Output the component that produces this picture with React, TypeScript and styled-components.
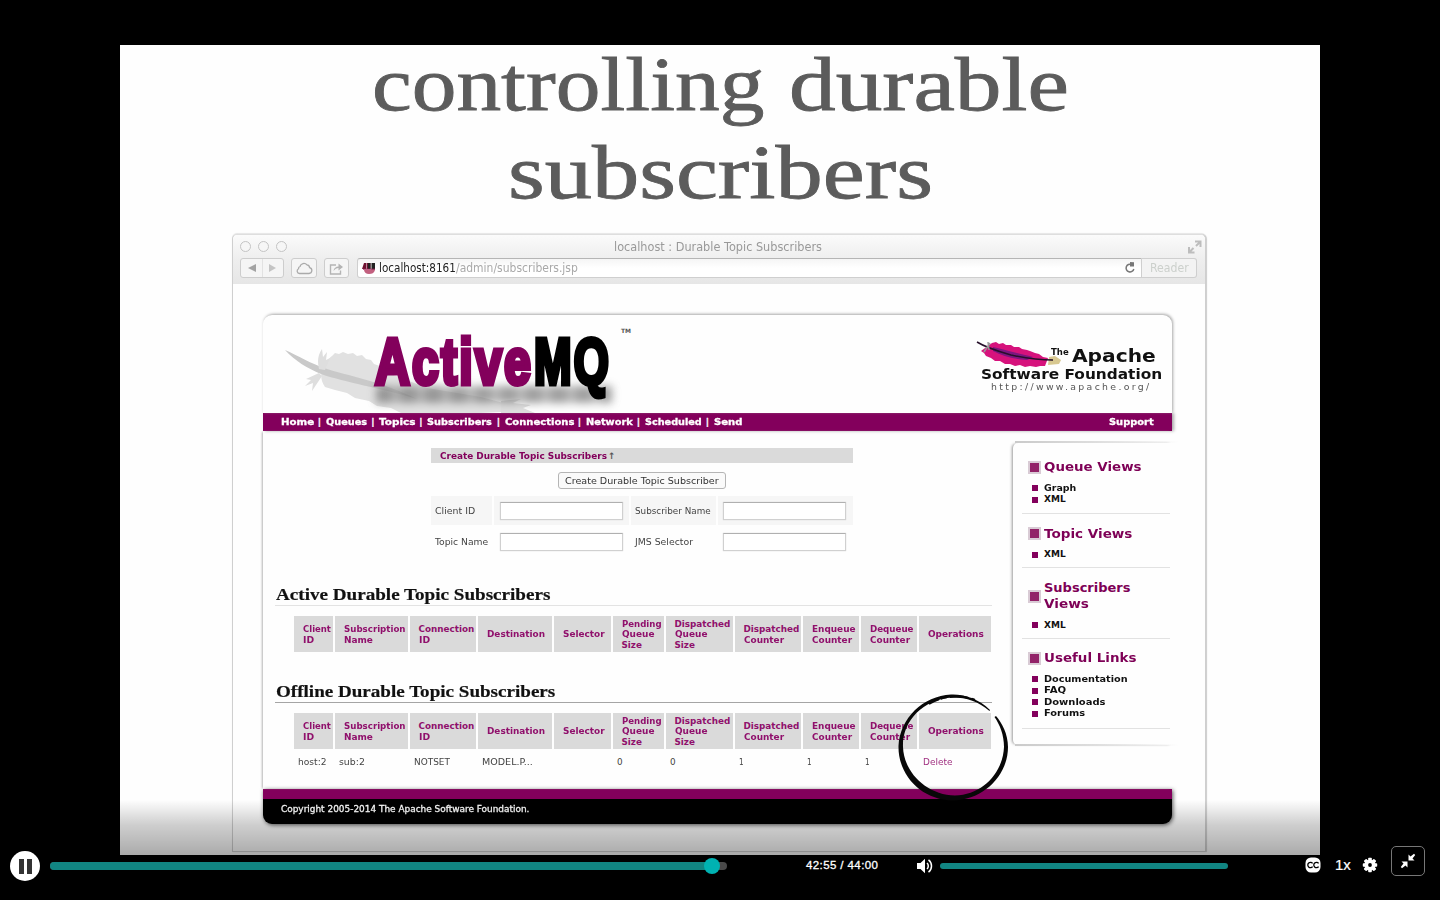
import React, { useLayoutEffect, useRef, useState } from "react";
import styled, { createGlobalStyle, css } from "styled-components";

const PURPLE = "#83005c";
const VERDANA = `"DejaVu Sans", Verdana, sans-serif`;

const GlobalStyle = createGlobalStyle`
  * { box-sizing: border-box; }
  body { margin: 0; background: #000; overflow: hidden; }
  h1, h2, h3, ul { margin: 0; padding: 0; font-weight: inherit; }
  ul { list-style: none; }
`;

/* ---------- text fitted to a line width ---------- */

const FitBox = styled.span<{ $w: number }>`
  display: inline-block;
  width: ${(p) => p.$w}px;
  white-space: nowrap;
  vertical-align: baseline;
`;
const FitInner = styled.span`
  display: inline-block;
  transform-origin: 0 50%;
`;

function Fit({ w, children }: { w: number; children: React.ReactNode }) {
  const ref = useRef<HTMLSpanElement>(null);
  const [scale, setScale] = useState(1);
  useLayoutEffect(() => {
    if (ref.current) setScale(w / ref.current.offsetWidth);
  }, [w]);
  return (
    <FitBox $w={w}>
      <FitInner ref={ref} style={{ transform: `scaleX(${scale})` }}>{children}</FitInner>
    </FitBox>
  );
}

/* ---------- slide ---------- */

const Player = styled.main`
  width: 1440px;
  height: 900px;
  background: #000;
  display: flex;
  flex-direction: column;
  padding-top: 45px;
  overflow: hidden;
`;
const Slide = styled.section`
  position: relative;
  width: 1200px;
  height: 810px;
  flex: none;
  margin: 0 auto;
  background: #fefefe;
`;
const Title = styled.h1`
  display: flex;
  flex-direction: column;
  align-items: center;
  gap: 12px;
  padding-top: 1px;
  height: 189px;
  font: 400 76px/76px "Liberation Serif", serif;
  color: #5c5c5c;
  -webkit-text-stroke: 0.8px #5c5c5c;
`;
const TitleLine = styled.span`
  display: flex;
  gap: 24px;
`;
const Shade = styled.div`
  position: absolute;
  left: 0;
  right: 0;
  bottom: 0;
  height: 55px;
  background: linear-gradient(rgba(0, 0, 0, 0), rgba(0, 0, 0, 0.19) 45%, rgba(0, 0, 0, 0.33));
`;

/* ---------- browser window ---------- */

const Window = styled.div`
  position: relative;
  width: 974px;
  height: 618px;
  margin-left: 112px;
  border: 1px solid #cfcfcf;
  border-top-color: #dedede;
  border-radius: 5px 5px 0 0;
  box-shadow: 1px 0 1px #ccc, 0 -1px 1px #e9e9e9;
  background: #fefefe;
`;
const Chrome = styled.div`
  height: 49px;
  background: linear-gradient(#fbfbfb, #efefef 45%, #e6e6e6);
  border-radius: 5px 5px 0 0;
`;
const TitleBar = styled.div`
  height: 23px;
  display: flex;
  align-items: center;
  padding: 0 3px 0 7px;
`;
const Lights = styled.div`
  display: flex;
  gap: 7px;
  width: 374px;
`;
const Light = styled.i`
  width: 11px;
  height: 11px;
  border-radius: 50%;
  border: 1px solid #c4c4c4;
  background: #f6f6f6;
`;
const WindowTitle = styled.div`
  flex: 1;
  font: 12px/22px ${VERDANA};
  color: #999;
`;
const ToolBar = styled.div`
  height: 20px;
  display: flex;
  align-items: stretch;
  padding: 0 8px 0 7px;
`;
const ToolButton = styled.div<{ $w: number; $gap: number }>`
  width: ${(p) => p.$w}px;
  margin-right: ${(p) => p.$gap}px;
  border: 1px solid #cdcdcd;
  border-radius: 3px;
  background: #f5f5f5;
  display: flex;
  align-items: center;
  justify-content: center;
`;
const Address = styled.div`
  width: 785px;
  border: 1px solid #cfcfcf;
  border-top-color: #b5b5b5;
  border-radius: 3px 0 0 3px;
  background: linear-gradient(#f5f5f5, #fff 50%);
  display: flex;
  align-items: center;
  padding: 0 4px;
  font: 11.5px/18px ${VERDANA};
  color: #a9a9a9;
`;
const Host = styled.span`
  color: #222;
  margin-left: 3px;
`;
const Spacer = styled.span`
  flex: 1;
`;
const Reader = styled.div`
  flex: 1;
  border: 1px solid #cfcfcf;
  border-left: 0;
  border-radius: 0 3px 3px 0;
  background: #f3f3f3;
  padding-left: 8px;
  font: 11.5px/18px ${VERDANA};
  color: #ccd0cc;
`;

/* ---------- console page ---------- */

const Site = styled.div`
  position: relative;
  width: 909px;
  height: 509px;
  margin: 31px 0 0 30px;
  display: flex;
  flex-direction: column;
  border-radius: 9px;
`;
const Masthead = styled.header`
  position: relative;
  flex: none;
  height: 98px;
  background: #fefefe;
  border-radius: 9px 9px 0 0;
  box-shadow: 1px -1px 3px #a8a8a8;
`;
const GreyFeather = styled.svg`
  position: absolute;
  left: 20px;
  top: 32px;
`;
const Logo = styled.div`
  position: absolute;
  left: 112px;
  top: 7px;
  font: 700 65px/80px "Liberation Sans", Arial, sans-serif;
  letter-spacing: 3px;
  color: ${PURPLE};
  display: flex;
  -webkit-text-stroke: 5px currentColor;
`;
const LogoTail = styled.span`
  color: #000;
  margin-left: 1px;
`;
const LogoShadow = styled.div`
  position: absolute;
  left: 113px;
  top: 71px;
  width: 236px;
  height: 17px;
  background: repeating-linear-gradient(90deg, #777 0 14px, #aaa 19px, #888 25px);
  filter: blur(4px);
  opacity: 0.7;
`;
const Trademark = styled.span`
  position: absolute;
  left: 358px;
  top: 11px;
  font: 700 6px/10px ${VERDANA};
  color: #555;
`;
const Foundation = styled.div`
  position: absolute;
  left: 712px;
  top: 24px;
  width: 190px;
  height: 60px;
  color: #111;
  font-family: ${VERDANA};
`;
const FoundationTop = styled.div`
  display: flex;
  height: 27px;
  padding-left: 76px;
  padding-top: 3px;
  font: 700 18.5px/28px ${VERDANA};
`;
const Small = styled.span`
  font-size: 9px;
  line-height: 20px;
  margin-right: 3px;
`;
const FoundationName = styled.div`
  padding-left: 6px;
  height: 17px;
  font: 700 14.5px/17px ${VERDANA};
`;
const FoundationUrl = styled.div`
  padding-left: 16px;
  font: 8px/9px ${VERDANA};
  letter-spacing: 2px;
  color: #555;
`;
const PinkFeather = styled.svg`
  position: absolute;
  left: 0;
  top: 0;
`;
const Nav = styled.nav`
  flex: none;
  height: 18px;
  background: ${PURPLE};
  box-shadow: 2px 0 3px #aaa;
  display: flex;
  justify-content: space-between;
  padding: 0 18px;
  font: 700 9px/19px ${VERDANA};
  color: #fff;
  -webkit-text-stroke: 0.3px #fff;
`;
const NavItems = styled.div`
  display: flex;
`;
const NavItem = styled.span<{ $slot: number }>`
  width: ${(p) => p.$slot}px;
  display: flex;
  justify-content: space-between;
  padding-right: 4.5px;
`;
const Columns = styled.div`
  position: relative;
  flex: 1;
  display: flex;
  box-shadow: -2px 0 2px -1px #b5b5b5;
`;
const Main = styled.section`
  width: 749px;
  padding-left: 12px;
  padding-top: 17px;
  font-family: ${VERDANA};
`;
const Create = styled.div`
  width: 422px;
  margin-left: 156px;
  height: 129px;
`;
const CreateHead = styled.div`
  height: 15px;
  background: #dadada;
  padding-left: 9px;
  font: 700 9px/16px ${VERDANA};
  color: ${PURPLE};
`;
const Arrow = styled.span`
  margin-left: 1px;
  color: #555;
`;
const CreateButton = styled.div`
  width: 168px;
  height: 17px;
  margin: 9px auto 7px;
  position: relative;
  border: 1px solid #b5b5b5;
  border-radius: 3px;
  background: #fafafa;
  padding-left: 6px;
  font: 9.5px/15px ${VERDANA};
  color: #333;
`;
const FieldRow = styled.div<{ $tint?: boolean }>`
  display: grid;
  grid-template-columns: 61px 135px 85px 135px;
  gap: 2px;
  height: 29px;
  margin-bottom: 2px;
  font: 8.7px/31px ${VERDANA};
  color: #444;
  > * { height: 29px; background: ${(p) => (p.$tint ? "#f6f6f6" : "transparent")}; }
`;
const Label = styled.div`
  padding-left: 4px;
`;
const Field = styled.div`
  display: flex;
  align-items: center;
  padding-left: 6px;
  &:last-child { padding-left: 5.4px; }
`;
const Input = styled.div`
  width: 123px;
  height: 18px;
  border: 1px solid #d0d0d0;
  border-top: 1px solid #b0b0b0;
  background: #fff;
  box-shadow: 0 0 1px #ccc;
`;
const Heading = styled.h2<{ $line: string }>`
  width: 717px;
  height: 29px;
  border-bottom: 1px solid ${(p) => p.$line};
  padding-left: 1px;
  font: 700 17.5px/35px "Liberation Serif", Georgia, serif;
  color: #111;
  -webkit-text-stroke: 0.2px #111;
`;
const Grid = styled.div`
  display: grid;
  grid-template-columns: 39px 73px 66px 74px 57px 51px 67px 66px 56px 56px 72px;
  column-gap: 2px;
  margin-left: 19px;
`;
const Head = styled.div`
  height: 36px;
  background: #dadada;
  display: flex;
  flex-direction: column;
  justify-content: center;
  padding-left: 8.5px;
  padding-top: 1px;
  font: 700 8.8px/10.6px ${VERDANA};
  color: #90106c;
`;
const Cell = styled.div<{ $link?: boolean }>`
  padding-left: 4px;
  font: 8.8px/27px ${VERDANA};
  color: ${(p) => (p.$link ? "#a03080" : "#444")};
`;
const TableBlock = styled.div<{ $h: number }>`
  padding-top: 10px;
  height: ${(p) => p.$h}px;
`;
const Side = styled.aside`
  position: relative;
  width: 159px;
  height: 302px;
  margin: 12px 0 0 1px;
  padding: 0 2px 0 9px;
  border-radius: 5px 0 0 5px;
  background: #fefefe;
  box-shadow: -2px 0 3px -1px #999;
  &::before,
  &::after {
    content: "";
    position: absolute;
    left: 2px;
    width: 164px;
    height: 2px;
    background: linear-gradient(90deg, #cacaca, #dedede 50%, transparent);
  }
  &::before { top: -2px; }
  &::after { bottom: -1px; }
`;
const SideGroup = styled.section<{ $h: number; $top: number }>`
  height: ${(p) => p.$h}px;
  border-bottom: 1px solid #e2e2e2;
  padding-top: ${(p) => p.$top}px;
`;
const SideTitle = styled.h3`
  display: flex;
  align-items: center;
  gap: 4px;
  padding-left: 7px;
  margin-bottom: 7.5px;
  font: 700 13px/16px ${VERDANA};
  color: #7e0056;
`;
const SideLines = styled.div`
  display: flex;
  flex-direction: column;
`;
const Square = styled.i`
  width: 11px;
  height: 11px;
  background: #922268;
  outline: 2px solid #d9cbd5;
  outline-offset: -1px;
`;
const SideItem = styled.li`
  display: flex;
  align-items: center;
  gap: 6px;
  height: 11.6px;
  padding-left: 10px;
  font: 700 9px/11.6px ${VERDANA};
  color: #111;
`;
const Bullet = styled.i`
  width: 6px;
  height: 6px;
  background: ${PURPLE};
`;
const Footer = styled.footer`
  flex: none;
  height: 35px;
  border-top: 10px solid ${PURPLE};
  border-radius: 0 0 9px 9px;
  background: #000;
  box-shadow: 1px 1px 4px #555;
  padding-left: 18px;
  font: 9px/21px ${VERDANA};
  color: #fff;
  -webkit-text-stroke: 0.3px #fff;
`;
const Ring = styled.svg`
  position: absolute;
  left: 769px;
  top: 640px;
`;

/* ---------- player controls ---------- */

const Controls = styled.div`
  height: 45px;
  flex: none;
  display: flex;
  align-items: flex-start;
  color: #fff;
  font-family: "Liberation Sans", Arial, sans-serif;
`;
const center = css`
  display: flex;
  align-items: center;
`;
const Slot = styled.div<{ $w: number; $h?: number }>`
  width: ${(p) => p.$w}px;
  height: ${(p) => p.$h ?? 22}px;
  flex: none;
  ${center}
`;
const Pause = styled.div`
  width: 30px;
  height: 30px;
  flex: none;
  margin: -4px 10px 0 10px;
  border-radius: 50%;
  background: #fff;
  ${center}
  justify-content: center;
  gap: 3px;
`;
const PauseBar = styled.i`
  width: 5px;
  height: 15px;
  background: #333;
`;
const Track = styled.div<{ $h: number; $bg: string }>`
  width: 100%;
  height: ${(p) => p.$h}px;
  border-radius: 4px;
  background: ${(p) => p.$bg};
  ${center}
`;
const Played = styled.div`
  width: 662px;
  height: 8px;
  border-radius: 4px;
  background: #118582;
`;
const Knob = styled.i`
  width: 16px;
  height: 16px;
  margin-left: -8px;
  border-radius: 50%;
  background: #00b2b2;
`;
const Time = styled.span`
  font-size: 11.5px;
  letter-spacing: 0.4px;
  -webkit-text-stroke: 0.3px #fff;
`;
const Speed = styled.span`
  font-size: 15px;
  -webkit-text-stroke: 0.2px #fff;
`;
const Shrink = styled.div`
  width: 34px;
  height: 30px;
  margin-top: -9px;
  flex: none;
  border: 1px solid #777;
  border-radius: 5px;
  ${center}
  justify-content: center;
`;

const NAV: [string, number, number][] = [
  ["Home", 33, 44.5], ["Queues", 41, 53.5], ["Topics", 36, 48], ["Subscribers", 65, 77.5],
  ["Connections", 69, 81], ["Network", 47, 59], ["Scheduled", 57, 69], ["Send", 28, 34],
];
const HEADS: [string, number][][] = [
  [["Client", 28], ["ID", 11.5]],
  [["Subscription", 62], ["Name", 28.5]],
  [["Connection", 56], ["ID", 11.5]],
  [["Destination", 57.5]],
  [["Selector", 41.5]],
  [["Pending", 40], ["Queue", 32.5], ["Size", 20]],
  [["Dispatched", 56], ["Queue", 32.5], ["Size", 20]],
  [["Dispatched", 56], ["Counter", 40.5]],
  [["Enqueue", 43.5], ["Counter", 40.5]],
  [["Dequeue", 43.5], ["Counter", 40.5]],
  [["Operations", 56]],
];
const ROW: [string, number][] = [
  ["host:2", 29], ["sub:2", 25.5], ["NOTSET", 35.5], ["MODEL.P...", 51], ["", 0],
  ["0", 6], ["0", 6], ["1", 5], ["1", 5], ["1", 5], ["Delete", 29.5],
];
const SIDE: { h: number; top: number; title: [string, number][]; items: [string, number][] }[] = [
  { h: 71, top: 16, title: [["Queue Views", 98]], items: [["Graph", 32.5], ["XML", 22]] },
  { h: 54, top: 11.5, title: [["Topic Views", 88.5]], items: [["XML", 22]] },
  { h: 70.5, top: 12, title: [["Subscribers", 87], ["Views", 45]], items: [["XML", 22]] },
  { h: 90, top: 11.5, title: [["Useful Links", 92]], items: [["Documentation", 84], ["FAQ", 22.5], ["Downloads", 62], ["Forums", 41.5]] },
];

function Heads() {
  return (
    <>
      {HEADS.map((lines, i) => (
        <Head key={i}>
          {lines.map(([t, w]) => <Fit key={t} w={w}>{t}</Fit>)}
        </Head>
      ))}
    </>
  );
}

export default function App() {
  return (
    <Player>
      <GlobalStyle />
      <Slide>
        <Title>
          <TitleLine>
            <Fit w={393}>controlling</Fit>
            <Fit w={280}>durable</Fit>
          </TitleLine>
          <TitleLine><Fit w={425}>subscribers</Fit></TitleLine>
        </Title>
        <Window>
          <Chrome>
            <TitleBar>
              <Lights><Light /><Light /><Light /></Lights>
              <WindowTitle><Fit w={208}>localhost : Durable Topic Subscribers</Fit></WindowTitle>
              <svg width="14" height="14" viewBox="0 0 14 14" fill="none" stroke="#bdbdbd" strokeWidth="2">
                <path d="M7 1.500h5.500V7M12.500 1.500L8 6M6.500 12.500H1V7M1 12.500L5.500 8" />
              </svg>
            </TitleBar>
            <ToolBar>
              <ToolButton $w={44} $gap={7}>
                <svg width="42" height="18" viewBox="0 0 42 18">
                  <path d="M15 5v8L7 9z" fill="#a3a3a3" />
                  <path d="M28 5v8l7-4z" fill="#c4c4c4" />
                  <path d="M21.500 0v18" stroke="#e2e2e2" />
                </svg>
              </ToolButton>
              <ToolButton $w={26} $gap={7}>
                <svg width="18" height="14" viewBox="0 0 18 14" fill="none" stroke="#aaa" strokeWidth="1.3">
                  <path d="M4.500 12.500h9.500a3 3 0 0 0 .6-5.900 3 3 0 0 0-2.600-2.700A4 4 0 0 0 5 5.500a2.300 2.300 0 0 0-1.500 2.300 2.500 2.500 0 0 0 1 4.700z" />
                </svg>
              </ToolButton>
              <ToolButton $w={25} $gap={8}>
                <svg width="15" height="13" viewBox="0 0 15 13" fill="none" stroke="#b4b4b4" strokeWidth="1.4">
                  <path d="M7 3H1.500v9h10V8.500" />
                  <path d="M4.500 9c.3-3 2.500-4.500 5-4.500V1.500L14 5l-4.500 3.500V6C7.500 6 6 7 4.500 9z" fill="#b4b4b4" stroke="none" />
                </svg>
              </ToolButton>
              <Address>
                <svg width="14" height="11" viewBox="0 0 14 11">
                  <path d="M2 7h11c-1 3-3 4-6 4S2.500 9.500 2 7z" fill="#c2607f" />
                  <path d="M0 6L2 0h2v6zM4.500 0h4v6h-4z" fill="#6d1030" />
                  <path d="M6 0h2.500v6H6zM9.500 0H13v6.500H9.500z" fill="#222" />
                  <path d="M1 6.200h12" stroke="#9b1c50" />
                </svg>
                <Host><Fit w={77}>localhost:8161</Fit></Host>
                <Fit w={122}>/admin/subscribers.jsp</Fit>
                <Spacer />
                <svg width="14" height="14" viewBox="0 0 14 14" fill="none" stroke="#777" strokeWidth="1.5">
                  <path d="M10.800 8a3.900 3.900 0 1 1-2.300-4.500" />
                  <path d="M7 1l4 .2v4.300H7z" fill="#777" stroke="none" />
                </svg>
              </Address>
              <Reader><Fit w={39}>Reader</Fit></Reader>
            </ToolBar>
          </Chrome>

          <Site>
            <Masthead>
              <GreyFeather width="264" height="66" viewBox="0 0 264 66">
                <path d="M42 20c2-6 4-9 7-11l3-3 4 1 4-2 5 2 5-1 4 3 5-1 4 4 5 1 3 4 6 2 3 5 8 3 36 14 30 5 24 4 30 8 10 6-40 2H118l-10-5-14-2-8-5-14-3-8-5-12-3-10-3c-6-8-4-18 0-20z" fill="#e1e1e1" />
                <path d="M2 3c14 6 24 13 42 19 30 9 55 13 90 30-40-12-70-16-96-25C24 21 12 14 2 3z" fill="#c9c9c9" />
                <path d="M36 22c-2-8-1-14 3-20l1 8 4-5-1 8 4-2-5 12zM36 26l-13 6 5 1-6 6 8-3-1 8 10-15zM218 54l20-2-8 4 18 2-8 3 12 5h-34z" fill="#dedede" />
              </GreyFeather>
              <LogoShadow />
              <Logo>
                <Fit w={158}>Active</Fit>
                <LogoTail><Fit w={77}>MQ</Fit></LogoTail>
              </Logo>
              <Trademark>TM</Trademark>
              <Foundation>
                <PinkFeather width="90" height="32" viewBox="0 0 90 32">
                  <path d="M17 4l4-1 3 2 4-1 3 2 5 0 3 2 5 0 3 2 5 1 3 1 5 2 4 1 4 3 5 1-3 8-5 0-4 1-6-1-5 1-5-2-5 1-5-2-5 0-5-3-5 0-4-3-5-2-2-3-3-2z" fill="#d6127c" />
                  <path d="M18 8c10 2 22 6 40 10l-6 3c-14-1-24-4-34-9z" fill="#7c1680" />
                  <path d="M74 18l6-1 6 4-2 4-11 1z" fill="#d8c890" />
                  <path d="M2 3c8 5 20 9 34 13 14 3 26 5 42 5" stroke="#26102a" strokeWidth="1.500" fill="none" />
                  <path d="M9 13l6-9M13 3l1 8" stroke="#999" strokeWidth="1.500" fill="none" />
                </PinkFeather>
                <FoundationTop>
                  <Small><Fit w={18}>The</Fit></Small>
                  <Fit w={84}>Apache</Fit>
                </FoundationTop>
                <FoundationName><Fit w={181}>Software Foundation</Fit></FoundationName>
                <FoundationUrl><Fit w={161}>http://www.apache.org/</Fit></FoundationUrl>
              </Foundation>
            </Masthead>
            <Nav>
              <NavItems>
                {NAV.map(([t, w, slot], i) => (
                  <NavItem key={t} $slot={slot}>
                    <Fit w={w}>{t}</Fit>
                    {i < NAV.length - 1 && <span>|</span>}
                  </NavItem>
                ))}
              </NavItems>
              <Fit w={45}>Support</Fit>
            </Nav>
            <Columns>
              <Main>
                <Create>
                  <CreateHead>
                    <Fit w={167}>Create Durable Topic Subscribers</Fit>
                    <Arrow>↑</Arrow>
                  </CreateHead>
                  <CreateButton><Fit w={154}>Create Durable Topic Subscriber</Fit></CreateButton>
                  <FieldRow $tint>
                    <Label><Fit w={40}>Client ID</Fit></Label>
                    <Field><Input /></Field>
                    <Label><Fit w={76}>Subscriber Name</Fit></Label>
                    <Field><Input /></Field>
                  </FieldRow>
                  <FieldRow>
                    <Label><Fit w={53}>Topic Name</Fit></Label>
                    <Field><Input /></Field>
                    <Label><Fit w={58}>JMS Selector</Fit></Label>
                    <Field><Input /></Field>
                  </FieldRow>
                </Create>
                <Heading $line="#e3e3e3"><Fit w={274}>Active Durable Topic Subscribers</Fit></Heading>
                <TableBlock $h={68}><Grid><Heads /></Grid></TableBlock>
                <Heading $line="#a5a5a5"><Fit w={279}>Offline Durable Topic Subscribers</Fit></Heading>
                <TableBlock $h={76}>
                  <Grid>
                    <Heads />
                    {ROW.map(([t, w], i) => (
                      <Cell key={i} $link={t === "Delete"}>{t && <Fit w={w}>{t}</Fit>}</Cell>
                    ))}
                  </Grid>
                </TableBlock>
              </Main>
              <Side>
                {SIDE.map((g) => (
                  <SideGroup key={g.title[0][0]} $h={g.h} $top={g.top}>
                    <SideTitle>
                      <Square />
                      <SideLines>{g.title.map(([t, w]) => <Fit key={t} w={w}>{t}</Fit>)}</SideLines>
                    </SideTitle>
                    <ul>
                      {g.items.map(([t, w]) => (
                        <SideItem key={t}><Bullet /><Fit w={w}>{t}</Fit></SideItem>
                      ))}
                    </ul>
                  </SideGroup>
                ))}
              </Side>
            </Columns>
            <Footer><Fit w={248}>Copyright 2005-2014 The Apache Software Foundation.</Fit></Footer>
          </Site>
        </Window>
        <Ring width="130" height="124" viewBox="0 0 130 124" fill="#080808">
          <path d="M101 25C89 13 74 9 62 9.500C34 11 11 33 9.500 61C9 90 32 115 64 115.500C95 115 119 90 119 62C119 49 113 38 107 31L105.500 32C111 40 115 50 115 62C114 87 94 110 66 110.500C38 110 15 88 14 62C13 36 34 15 62 12.500C76 12 89 16 100.500 26z" />
          <path d="M40 19C52 11 72 9 86 15" fill="none" stroke="#080808" strokeWidth="2" strokeDasharray="11 2 6 3" />
        </Ring>
        <Shade />
      </Slide>

      <Controls>
        <Pause><PauseBar /><PauseBar /></Pause>
        <Slot $w={677}><Track $h={8} $bg="#4a4a4a"><Played /><Knob /></Track></Slot>
        <Slot $w={79} />
        <Slot $w={111} $h={20}><Time><Fit w={72}>42:55 / 44:00</Fit></Time></Slot>
        <Slot $w={23}>
          <svg width="16" height="16" viewBox="0 0 16 16" fill="#fff">
            <path d="M0 5h3.500L8 .8v14.400L3.500 11H0z" />
            <path d="M10 5c1.700 1.500 1.700 4.500 0 6M11.500 1.800c4 3 4 9.400 0 12.400" fill="none" stroke="#fff" strokeWidth="1.500" />
          </svg>
        </Slot>
        <Slot $w={288}><Track $h={6} $bg="#118582" /></Slot>
        <Slot $w={77} />
        <Slot $w={30} $h={19}>
          <svg width="16" height="16" viewBox="0 0 16 16">
            <rect x=".5" y=".5" width="15" height="15" rx="5.500" fill="#fff" />
            <path d="M7.600 6.300a2.700 2.700 0 1 0 0 3.400M13.600 6.300a2.700 2.700 0 1 0 0 3.400" fill="none" stroke="#000" strokeWidth="1.300" />
          </svg>
        </Slot>
        <Slot $w={27} $h={19}><Speed>1x</Speed></Slot>
        <Slot $w={29} $h={19}>
          <svg width="16" height="16" viewBox="-8 -8 16 16">
            <g fill="#fff">
              {[0, 45, 90, 135].map((a) => (
                <rect key={a} x="-1.800" y="-7.200" width="3.600" height="14.400" rx=".8" transform={`rotate(${a})`} />
              ))}
              <circle r="5.600" />
            </g>
            <circle r="1.900" fill="#000" />
          </svg>
        </Slot>
        <Shrink>
          <svg width="16" height="16" viewBox="0 0 16 16" fill="#fff">
            <path d="M8.500 7.500v-6l2 2L14 .8 15.200 2l-2.700 3.500 2 2zM7.500 8.500v6l-2-2L2 15.200.8 14l2.700-3.500-2-2z" />
          </svg>
        </Shrink>
      </Controls>
    </Player>
  );
}
